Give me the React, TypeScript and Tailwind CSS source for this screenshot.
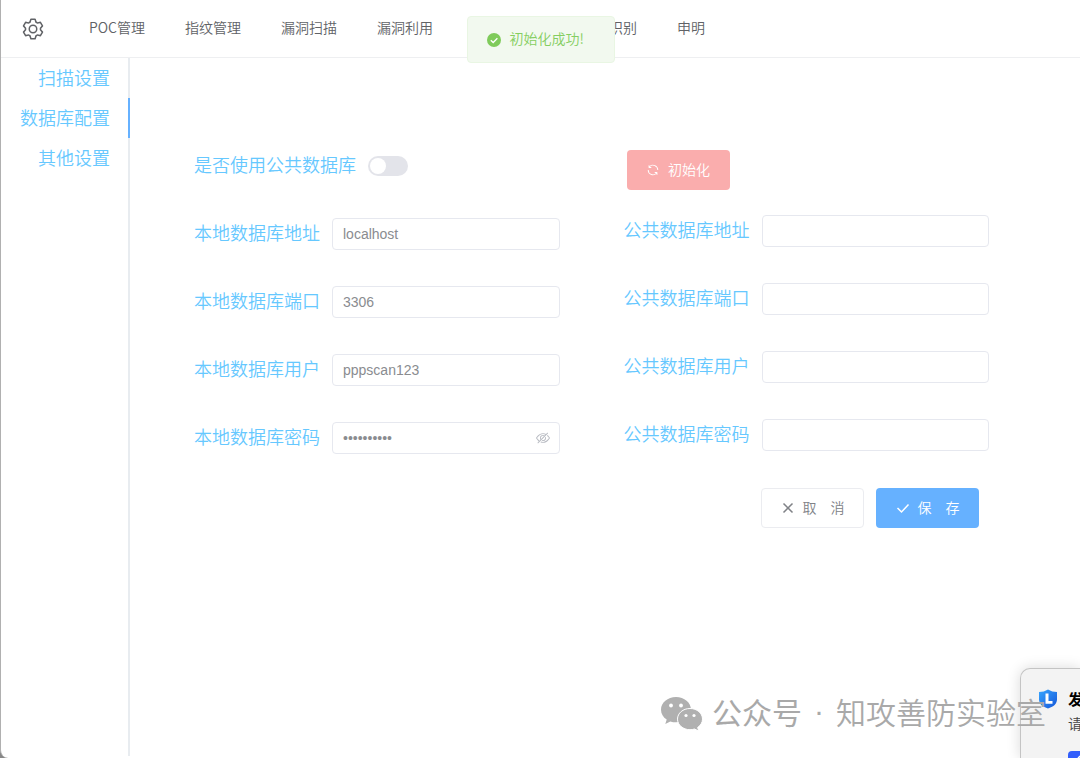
import { useState } from "react";

const navItems = ["POC管理", "指纹管理", "漏洞扫描", "漏洞利用"];
const navItemsEnd = ["识别", "申明"];
const sideItems = ["扫描设置", "数据库配置", "其他设置"];
const localFields = [
  { id: "local-host", label: "本地数据库地址", value: "localhost", type: "text" },
  { id: "local-port", label: "本地数据库端口", value: "3306", type: "text" },
  { id: "local-user", label: "本地数据库用户", value: "pppscan123", type: "text" },
  { id: "local-pass", label: "本地数据库密码", value: "pppscan123", type: "password" },
];
const publicFields = [
  { id: "public-host", label: "公共数据库地址", value: "", type: "text" },
  { id: "public-port", label: "公共数据库端口", value: "", type: "text" },
  { id: "public-user", label: "公共数据库用户", value: "", type: "text" },
  { id: "public-pass", label: "公共数据库密码", value: "", type: "text" },
];

function SettingIcon() {
  return (
    <svg viewBox="0 0 1024 1024" className="size-6" fill="#606266" aria-hidden="true">
      <path d="M600.704 64a32 32 0 0 1 30.464 22.208l35.2 109.376c14.784 7.232 28.928 15.36 42.432 24.512l112.384-24.192a32 32 0 0 1 34.432 15.36L944.32 364.8a32 32 0 0 1-4.032 37.504l-77.12 85.12a357.12 357.12 0 0 1 0 49.024l77.12 85.248a32 32 0 0 1 4.032 37.504l-88.704 153.6a32 32 0 0 1-34.432 15.296L708.8 803.904c-13.44 9.088-27.648 17.28-42.368 24.512l-35.264 109.376A32 32 0 0 1 600.704 960H423.296a32 32 0 0 1-30.464-22.208L357.696 828.48a351.616 351.616 0 0 1-42.56-24.64l-112.32 24.256a32 32 0 0 1-34.432-15.36L79.68 659.2a32 32 0 0 1 4.032-37.504l77.12-85.248a357.12 357.12 0 0 1 0-48.896l-77.12-85.248A32 32 0 0 1 79.68 364.8l88.704-153.6a32 32 0 0 1 34.432-15.296l112.32 24.256c13.568-9.152 27.776-17.408 42.56-24.64l35.2-109.312A32 32 0 0 1 423.232 64H600.64zm-23.424 64H446.72l-36.352 113.088-24.512 11.968a294.113 294.113 0 0 0-34.816 20.096l-22.656 15.36-116.224-25.088-65.28 113.152 79.68 88.192-1.92 27.136a293.12 293.12 0 0 0 0 40.192l1.92 27.136-79.808 88.192 65.344 113.152 116.224-25.024 22.656 15.296a294.113 294.113 0 0 0 34.816 20.096l24.512 11.968L446.72 896h130.688l36.48-113.152 24.448-11.904a288.282 288.282 0 0 0 34.752-20.096l22.592-15.296 116.288 25.024 65.28-113.152-79.744-88.192 1.92-27.136a293.12 293.12 0 0 0 0-40.256l-1.92-27.136 79.808-88.128-65.344-113.152-116.288 24.96-22.592-15.232a287.616 287.616 0 0 0-34.752-20.096l-24.448-11.904L577.344 128zM512 320a192 192 0 1 1 0 384 192 192 0 0 1 0-384m0 64a128 128 0 1 0 0 256 128 128 0 0 0 0-256" />
    </svg>
  );
}

function RefreshIcon() {
  return (
    <svg viewBox="0 0 1024 1024" className="size-[14px]" fill="currentColor" aria-hidden="true">
      <path d="M771.776 794.88A384 384 0 0 1 128 512h64a320 320 0 0 0 555.712 216.448H654.72a32 32 0 1 1 0-64h149.056a32 32 0 0 1 32 32v148.928a32 32 0 1 1-64 0v-50.56zM276.288 295.616h92.992a32 32 0 0 1 0 64H220.16a32 32 0 0 1-32-32V178.56a32 32 0 0 1 64 0v50.56A384 384 0 0 1 896.128 512h-64a320 320 0 0 0-555.776-216.384z" />
    </svg>
  );
}

function HideIcon() {
  return (
    <svg viewBox="0 0 1024 1024" className="size-[14px]" fill="currentColor" aria-hidden="true">
      <path d="M876.8 156.8c0-9.6-3.2-16-9.6-22.4-6.4-6.4-12.8-9.6-22.4-9.6-9.6 0-16 3.2-22.4 9.6L736 220.8c-64-32-137.6-51.2-224-60.8-160 16-288 73.6-377.6 176C44.8 438.4 0 496 0 512s48 73.6 134.4 176c22.4 25.6 44.8 48 73.6 67.2l-86.4 89.6c-6.4 6.4-9.6 12.8-9.6 22.4 0 9.6 3.2 16 9.6 22.4 6.4 6.4 12.8 9.6 22.4 9.6 9.6 0 16-3.2 22.4-9.6l704-710.4c3.2-6.4 6.4-12.8 6.4-22.4Zm-646.4 528c-76.8-70.4-128-128-153.6-172.8 28.8-48 80-105.6 153.6-172.8C304 272 400 230.4 512 224c64 3.2 124.800 19.2 176 44.800l-54.400 54.400C598.400 300.800 560 288 512 288c-64 0-115.200 22.400-160 64s-64 96-64 160c0 48 12.800 89.600 35.200 124.800L256 707.200c-9.600-6.400-19.200-16-25.600-22.400Zm140.800-96c-12.800-22.400-19.200-48-19.200-76.800 0-44.800 16-83.200 48-112 32-28.800 67.200-48 112-48 28.800 0 54.400 6.400 73.600 19.200L371.200 588.800ZM889.600 336c-12.800-16-28.800-28.800-41.600-41.600l-48 48c73.600 67.200 124.800 124.800 150.400 169.600-28.800 48-80 105.600-153.600 172.800-73.600 67.200-172.800 108.800-284.800 115.200-51.200-3.200-99.200-12.800-140.800-28.800l-48 48c57.600 22.400 118.400 38.400 188.800 44.800 160-16 288-73.600 377.600-176C979.200 585.600 1024 528 1024 512s-48-73.600-134.400-176Z" />
      <path d="M511.998 672c-12.800 0-25.600-3.200-38.400-6.400l-51.200 51.200c28.800 12.800 57.600 19.200 89.600 19.200 64 0 115.200-22.400 160-64 41.600-41.600 64-96 64-160 0-32-6.400-64-19.200-89.600l-51.200 51.200c3.200 12.800 6.400 25.600 6.400 38.400 0 44.800-16 83.200-48 112-32 28.800-67.200 48-112 48Z" />
    </svg>
  );
}

type FieldProps = { id: string; label: string; value: string; type: string };

function Field({ id, label, value, type }: FieldProps) {
  return (
    <div className="flex h-8 items-center gap-3">
      <label htmlFor={id} className="shrink-0 pb-1 text-[18px] leading-7 text-[#66c8ff]">{label}</label>
      <div className="relative min-w-0 flex-1">
        <input
          id={id}
          type={type}
          defaultValue={value}
          className="block h-8 w-full rounded border border-[#e6e8ef] bg-white px-[10px] font-['Liberation_Sans',sans-serif] text-[14px] text-[#8a8c90] outline-none focus:border-[#66b1ff]"
        />
        {type === "password" && (
          <button type="button" aria-label="显示密码" className="absolute inset-y-0 right-[10px] flex items-center text-[#b8bbc2]">
            <HideIcon />
          </button>
        )}
      </div>
    </div>
  );
}

function Toast() {
  return (
    <div role="status" className="absolute top-4 left-1/2 flex h-[47px] w-[148px] -translate-x-1/2 items-center gap-2 rounded border border-[#e9f6e3] bg-[#f2f9ef] pl-[18px] text-[14px] text-[#85ce61]">
      <svg viewBox="0 0 16 16" className="size-4 shrink-0" aria-hidden="true">
        <circle cx="8" cy="8" r="7" fill="#7fcb5a" />
        <path d="M4.800 8.200 7.200 10.500 11.400 6.200" fill="none" stroke="#fff" strokeWidth="1.300" />
      </svg>
      <span className="pb-[2px] whitespace-nowrap">初始化成功!</span>
    </div>
  );
}

function Notice() {
  return (
    <aside className="absolute right-0 bottom-0 h-[90px] w-[60px] overflow-hidden rounded-tl-[10px] border-t border-l border-[#c4c4c4] bg-[#f3f3f3] pt-5 pl-[17px] shadow-[0_0_14px_rgba(0,0,0,0.15)]">
      <div className="flex gap-[10px]">
        <svg viewBox="0 0 20 20" className="size-5 shrink-0" aria-hidden="true">
          <defs>
            <linearGradient id="shield" x1="0" y1="0" x2="1" y2="1">
              <stop offset="0" stopColor="#38a7ff" />
              <stop offset="1" stopColor="#1455d8" />
            </linearGradient>
          </defs>
          <path d="M10 .5Q14 3 19 3v7.500c0 4.500-4 7.500-9 9-5-1.500-9-4.500-9-9V3Q6 3 10 .5Z" fill="url(#shield)" />
          <path d="M7.500 4.500h3v7.500h4v2.800h-7Z" fill="#fff" />
        </svg>
        <div className="whitespace-nowrap text-black">
          <p className="text-[15px] leading-5 font-bold">发</p>
          <p className="mt-[2px] text-[14px] leading-6 text-[#444]">请</p>
          <div className="mt-4 flex size-4 items-center justify-center rounded bg-[#315efb]">
            <svg viewBox="0 0 12 12" className="size-3" fill="none" stroke="#fff" strokeWidth="1.500" aria-hidden="true">
              <path d="m2 6 3 3 5-6" />
            </svg>
          </div>
        </div>
      </div>
    </aside>
  );
}

function Watermark() {
  return (
    <div className="pointer-events-none absolute right-[34px] bottom-[23px] flex items-center gap-[9px] whitespace-nowrap text-[#a9a9a9]">
      <svg viewBox="0 0 42 34" className="h-[34px] w-[42px]" aria-hidden="true">
        <path fill="#b0b0b0" d="M15 0C6.700 0 0 5.600 0 12.700c0 4 2.200 7.500 5.700 9.900L4.300 27l5-2.600c1.800.5 3.700.9 5.700.9C23.300 25.300 30 19.700 30 12.700S23.300 0 15 0Z" />
        <path fill="#b0b0b0" stroke="#fff" strokeWidth="1" d="M29 11.500c-7 0-12.500 4.700-12.500 10.600S22 32.700 29 32.700c1.600 0 3.100-.2 4.500-.7l4.300 2.100-1.200-3.600c3-2 4.900-5 4.900-8.400 0-5.900-5.500-10.600-12.500-10.600Z" />
        <circle cx="10" cy="8.500" r="1.900" fill="#fff" />
        <circle cx="20" cy="8.500" r="1.900" fill="#fff" />
        <circle cx="25" cy="18.500" r="1.600" fill="#fff" />
        <circle cx="33" cy="18.500" r="1.600" fill="#fff" />
      </svg>
      <p className="flex gap-3 pb-[6px] text-[30px] leading-9">
        <span className="font-normal">公众号</span>
        <span className="font-['Liberation_Sans',sans-serif]">·</span>
        <span>知攻善防实验室</span>
      </p>
    </div>
  );
}

export default function App() {
  const [active, setActive] = useState("数据库配置");
  return (
    <div className="bg-[#888888] font-['Noto_Sans_CJK_SC',sans-serif] font-[350]">
      <div className="relative flex min-h-screen flex-col overflow-hidden rounded-bl-lg border-l border-[#b0b0b0] bg-white">
        <header className="flex h-[58px] shrink-0 items-center border-b border-[#eeeff1] pl-5">
          <button type="button" aria-label="设置" className="mr-11">
            <SettingIcon />
          </button>
          <nav className="flex gap-10 pb-[3px] text-[14px] leading-5 whitespace-nowrap text-[#606266]">
            {navItems.map((item) => (
              <a key={item} href="#">{item}</a>
            ))}
            <div className="ml-[136px] flex gap-10">
              {navItemsEnd.map((item) => (
                <a key={item} href="#">{item}</a>
              ))}
            </div>
          </nav>
        </header>

        <div className="flex flex-1">
          <aside className="mb-[2px] w-[129px] shrink-0 border-r-2 border-[#e8ecf0]">
            {sideItems.map((item) => (
              <button
                key={item}
                type="button"
                onClick={() => setActive(item)}
                className={`-mr-[2px] block h-10 w-[129px] border-r-2 pr-[18px] pb-[2px] text-right text-[18px] text-[#66c8ff] ${item === active ? "border-[#66b1ff]" : "border-transparent"}`}
              >
                {item}
              </button>
            ))}
          </aside>

          <main className="flex-1 pt-[92px] pr-[91px] pl-16">
            <form className="grid grid-cols-2 gap-16" onSubmit={(e) => e.preventDefault()}>
              <div className="flex flex-col gap-9">
                <div className="flex h-8 items-center gap-3">
                  <label htmlFor="use-public" className="pb-1 text-[18px] leading-7 text-[#66c8ff]">是否使用公共数据库</label>
                  <input
                    id="use-public"
                    type="checkbox"
                    role="switch"
                    className="h-5 w-10 appearance-none rounded-full bg-[#e3e4ea] p-[2px] before:block before:size-4 before:rounded-full before:bg-white checked:bg-[#66b1ff] checked:before:ml-5"
                  />
                </div>
                {localFields.map((f) => (
                  <Field key={f.id} {...f} />
                ))}
              </div>

              <div>
                <button type="button" className="ml-[3px] flex h-10 w-[103px] items-center justify-center gap-2 rounded bg-[#faadad] text-[14px] text-white">
                  <RefreshIcon />
                  <span className="pb-[2px]">初始化</span>
                </button>
                <div className="mt-[25px] flex flex-col gap-9">
                  {publicFields.map((f) => (
                    <Field key={f.id} {...f} />
                  ))}
                </div>
                <div className="mt-[37px] flex justify-end gap-3 pr-[10px]">
                  <button type="button" className="flex h-10 w-[103px] items-center justify-center gap-2 rounded border border-[#ebecf0] bg-white text-[14px] text-[#808287]">
                    <svg viewBox="0 0 14 14" className="size-[14px]" fill="none" stroke="currentColor" strokeWidth="1.500" aria-hidden="true">
                      <path d="m2.500 2.500 9 9m0-9-9 9" />
                    </svg>
                    <span className="pb-[2px]">取　消</span>
                  </button>
                  <button type="submit" className="flex h-10 w-[103px] items-center justify-center gap-2 rounded bg-[#66b1ff] text-[14px] text-white">
                    <svg viewBox="0 0 14 14" className="size-[14px]" fill="none" stroke="currentColor" strokeWidth="1.500" aria-hidden="true">
                      <path d="m1.500 7 4 4 7-7.500" />
                    </svg>
                    <span className="pb-[2px]">保　存</span>
                  </button>
                </div>
              </div>
            </form>
          </main>
        </div>

        <Toast />
        <Notice />
        <Watermark />
      </div>
    </div>
  );
}
